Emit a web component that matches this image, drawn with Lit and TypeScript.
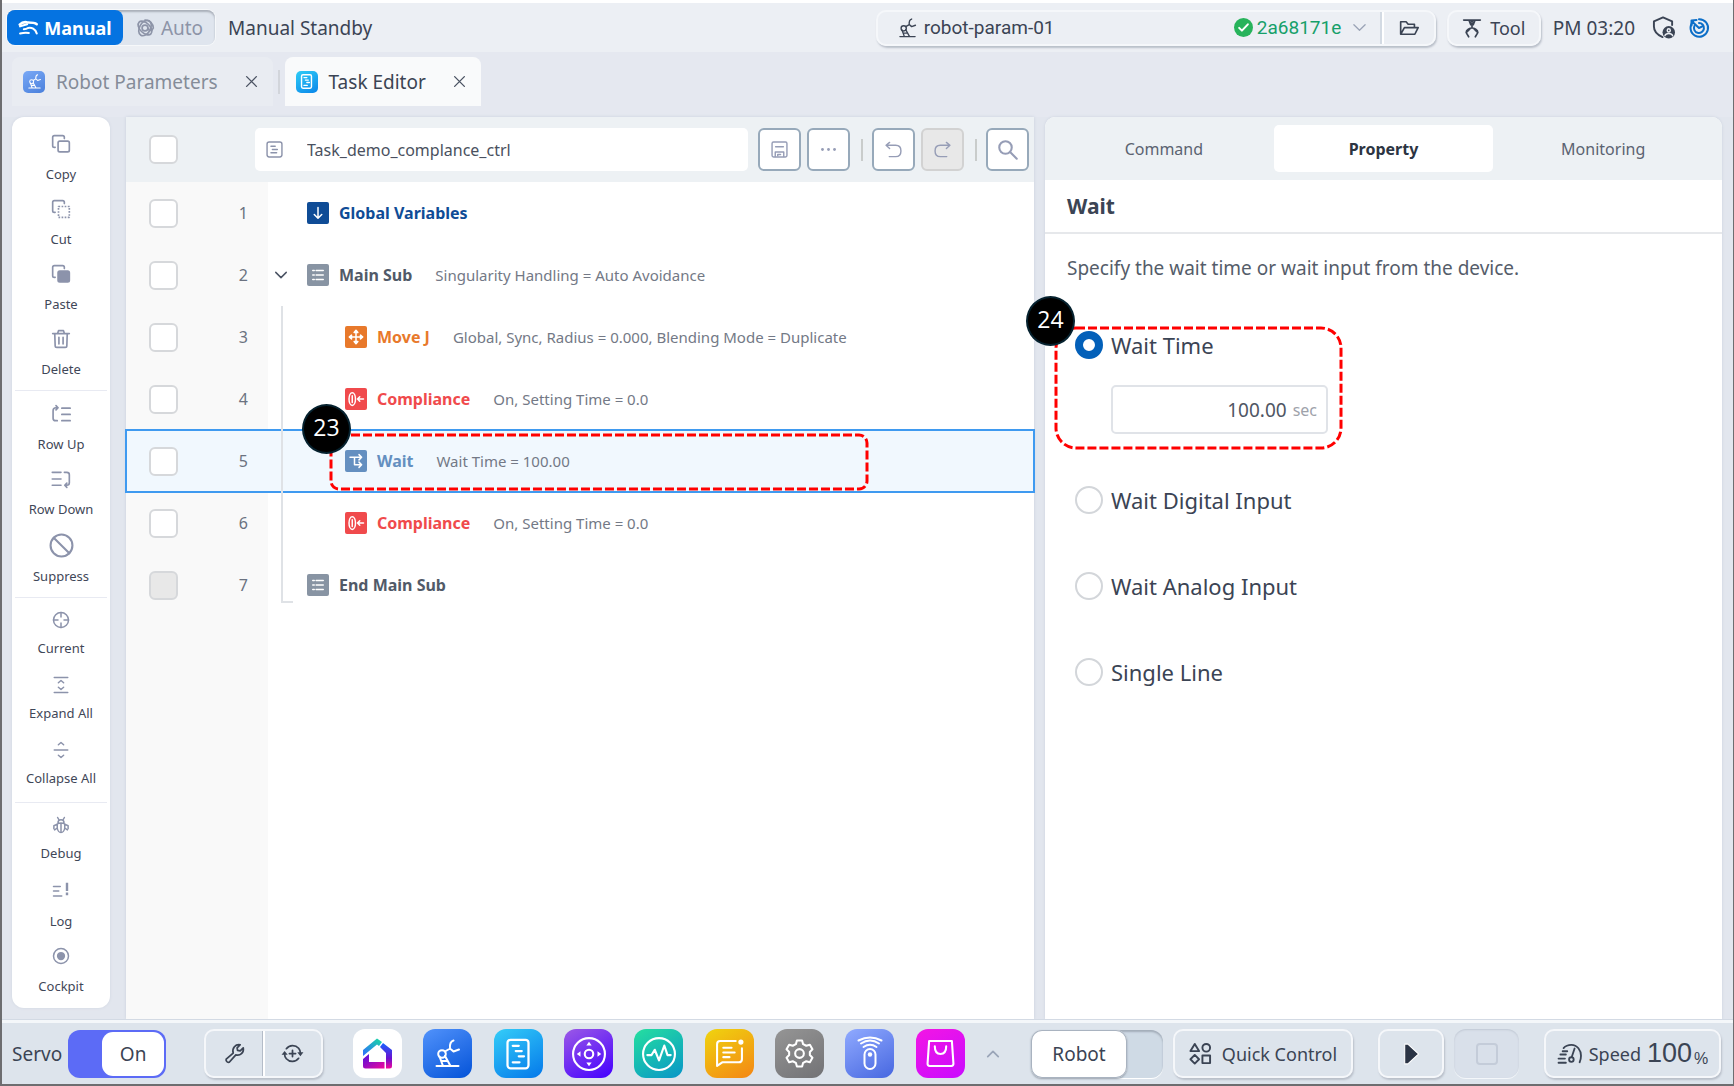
import { LitElement, html, svg, css, nothing, type TemplateResult, type SVGTemplateResult } from "lit";
import { customElement, state } from "lit/decorators.js";
import { classMap } from "lit/directives/class-map.js";

type Drawing = { box?: string; body: SVGTemplateResult };

const robotArm = svg`<path d="M1 27h22M4 17.500 7.500 27M9.500 17 15 27M6 22h5M9.500 12.500l5-3M18 1.500c-3 1-4 3-3.500 8l3.500 3 5.500-2"/><circle cx="6.500" cy="15" r="3.800"/>`;
const sheet = svg`<rect x="5" y="2.500" width="14" height="19" rx="2"/><path d="M8.500 6.500h4M10.500 10h4M12.500 13.500h3.500M8.500 17.500h4.500"/>`;

const ICONS: Record<string, Drawing> = {
  hand: {
    box: "0 0 24 18",
    body: svg`<path stroke-width="3" d="M2 5C5 2 9 1.500 12 2.500 16 2.500 20 2.500 22.500 4.500"/><path stroke-width="2.500" d="M2.500 7 11 4.500M7 10.500Q10 10.500 12 9C16 8 21 10 22.500 15.500M2.500 15.500Q9 14 13 15"/>`,
  },
  auto: { body: svg`<circle cx="12" cy="12" r="3.500"/><ellipse cx="12" cy="12" rx="6" ry="10" transform="rotate(-45 12 12)"/><ellipse cx="12" cy="12" rx="6.500" ry="10" transform="rotate(30 12 12)"/><path d="M15.500 12c1 4 5 4 6.500 0 0-5-4-9.500-10-9.500"/>` },
  robot: { box: "0 0 24 29", body: robotArm },
  sheet: { body: sheet },
  check: { body: svg`<circle cx="12" cy="12" r="12" fill="currentColor" stroke="none"/><path stroke="#fff" stroke-width="2.500" d="m6.500 12.500 3.500 3.500 7.500-8"/>` },
  down: { body: svg`<path d="m3 7.500 9 9 9-9"/>` },
  up: { body: svg`<path d="m3 16.500 9-9 9 9"/>` },
  folder: { body: svg`<path d="M2 19.500V4.500h6.500l2.500 3h7.500v4M2 19.500 6.500 11.500H23l-4 8z"/>` },
  gripper: { body: svg`<path d="M2 2.500h20M8.500 3l2 5h3l2-5M12 8v4M12 12c-2.500 0-7 2-7 5.500l3 5M12 12c2.500 0 7 2 7 5.500l-3 5M5 17.500 9.500 13M19 17.500 14.500 13"/><circle cx="12" cy="5.500" r="1.500"/>` },
  shield: { body: svg`<path d="M11 22c-6-2.500-9-6-9-11V5.500L11.500 1.500 21 5.500v4"/><circle cx="17.500" cy="17" r="6.500" fill="currentColor" stroke="none"/><circle cx="17.500" cy="15" r="1.600" stroke="#eceff4" stroke-width="1.500"/><path stroke="#eceff4" stroke-width="1.500" d="M13.500 20.500c1-3 7-3 8 0"/>` },
  swirl: { body: svg`<g stroke-width="2.400"><path d="M5 4.500a10.500 10.500 0 1 0 7-3"/><path d="M6.500 9.500a6 6 0 1 0 5.500-3.500"/><path d="M12 12 3 3.500M9 2.500 3 3v6M12 12l4-2"/></g>` },
  close: { body: svg`<path d="m3 3 18 18M21 3 3 21"/>` },
  copy: { body: svg`<rect x="8.500" y="8.500" width="13.500" height="13" rx="2"/><path d="M5 16H4a2 2 0 0 1-2-2V4a2 2 0 0 1 2-2h10a2 2 0 0 1 2 2v1.500"/>` },
  cut: { body: svg`<rect x="9" y="9" width="13" height="13" stroke-linecap="butt" stroke-dasharray="2 1.700"/><path d="M5 16H4a2 2 0 0 1-2-2V4a2 2 0 0 1 2-2h10a2 2 0 0 1 2 2v1.500"/>` },
  paste: { body: svg`<rect x="8.500" y="8.500" width="13.500" height="13" rx="2" fill="currentColor"/><path d="M5 16H4a2 2 0 0 1-2-2V4a2 2 0 0 1 2-2h10a2 2 0 0 1 2 2v1.500"/>` },
  trash: { body: svg`<path d="M2 5.500h20M4.500 5.500 5 20a2 2 0 0 0 2 2h10a2 2 0 0 0 2-2l.500-14.500M8 5l1-3h6l1 3M9.500 10v8M14.500 10v8"/>` },
  rowUp: { body: svg`<path d="M8 4.500H6Q2.500 4.500 2.500 8v9q0 3 3 3h2M6 2l2.500 2.500L6 7M13 5h10M13 12.500h10M13 20h10"/>` },
  rowDown: { body: svg`<path d="M16 4h3q3 0 3 3v9.500q0 3-3 3h-2M19 17l-2.500 2.500 2.500 2.500M1.500 4H12M1.500 12H12M1.500 19.500H12"/>` },
  suppress: { body: svg`<circle cx="12" cy="12" r="10.500"/><path d="m4.500 4.500 15 15"/>` },
  target: { body: svg`<circle cx="12" cy="12" r="10"/><path d="M12 2v6M12 16v6M2 12h6M16 12h6"/>` },
  expand: { body: svg`<path d="M3 2h18M3 22h18M8.500 9l3.500-3 3.500 3M8.500 15l3.500 3 3.500-3"/>` },
  collapse: { body: svg`<path d="M3 12h18M8.500 5 12 2l3.500 3M8.500 19l3.500 3 3.500-3"/>` },
  bug: { body: svg`<path d="M7 10.500Q12 8 17 10.500V16q-1 6-5 6t-5-6zM8 9q0-4 4-4t4 4M12 10v12M7.500 2l2 3.500M16.500 2l-2 3.500M7 11l-4.500 2v4M17 11l4.500 2v4M7 16l-3.500 2.500M17 16l3.500 2.500"/>` },
  log: { body: svg`<path d="M2 6h9M2 12h7M2 18.500h11"/><path stroke-width="3.200" stroke-linecap="butt" d="M20 1v11M20 14v3.500"/>` },
  record: { body: svg`<circle cx="12" cy="12" r="10"/><circle cx="12" cy="12" r="5.500" fill="currentColor" stroke="none"/>` },
  note: { body: svg`<rect x="1.500" y="1.500" width="21" height="21" rx="3"/><path d="M7 7.500h6M9 12h7M7 16.500h8"/>` },
  save: { body: svg`<rect x="1.500" y="1.500" width="21" height="21" rx="2"/><path d="M6.500 8h11M6 22v-6.500h12V22M9.500 21v-2h4"/>` },
  dots: { body: svg`<g fill="currentColor" stroke="none"><circle cx="3.500" cy="12" r="2"/><circle cx="12" cy="12" r="2"/><circle cx="20.500" cy="12" r="2"/></g>` },
  undo: { body: svg`<path d="M6.500 2 1.500 6l5 4.500M2 6h13q7.500 0 7.500 8t-7.500 8H6"/>` },
  redo: { body: svg`<path d="m17.500 2 5 4-5 4.500M22 6H9q-7.500 0-7.500 8T9 22h9"/>` },
  search: { body: svg`<circle cx="9" cy="9" r="7.500"/><path d="m14.500 14.500 8 8"/>` },
  arrowDown: { body: svg`<path d="M12 4.500v14M7 14l5 5 5-5"/>` },
  list: { body: svg`<path d="M5 6h2M5 12h2M5 18h2M9.500 6H19M9.500 12H19M9.500 18H19"/>` },
  move: { body: svg`<path d="M12 4v16M4 12h16"/><path fill="currentColor" d="m12 3 2.500 3h-5zM12 21l2.500-3h-5zM3 12l3-2.500v5zM21 12l-3-2.500v5z"/>` },
  compliance: { body: svg`<ellipse cx="7" cy="12" rx="4.300" ry="8.500"/><path d="M7 7.500v9M14 12h8M17 9l-3 3 3 3"/>` },
  wait: { body: svg`<path d="M4 7h15M10 7v10h9M16 3.500 19.500 7 16 10.500M16 13.500l3.500 3.500-3.500 3.500"/>` },
  wrench: { body: svg`<path d="M2.500 18.500 10.500 11.500C9 6 13 1 18.500 2L15 5.500l.500 3 3 .500L22 5.500c1 5.500-3.500 9.500-8.500 8L6 22q-2 .500-3-1t-.500-2.500z"/>` },
  cycle: { body: svg`<path d="M5 6.500a9 9 0 0 1 14-.500q2 2.500 2 5M19 17.500a9 9 0 0 1-14 .500q-2-2.500-2-5M12 8.500v7M8.500 12h7"/><path fill="currentColor" stroke="none" d="M17.500 10.500H24.500L21 15zM-.500 13.500h7L3 9z"/>` },
  jog: { box: "0 0 32 32", body: svg`<circle cx="16" cy="16" r="15"/><circle cx="16" cy="16" r="4"/><path fill="currentColor" stroke="none" d="m16 4.500 2.500 3.500h-5zM16 27.500l2.500-3.500h-5zM4.500 16 8 13.500v5zM27.500 16 24 13.500v5z"/>` },
  pulse: { box: "0 0 32 32", body: svg`<circle cx="16" cy="16" r="15"/><path d="M5 17h4l3-5 4 10 5-14 3 9h3"/>` },
  memo: { box: "0 0 28 28", body: svg`<path d="M20 2H5Q2 2 2 5v21l5-3.500h16q3 0 3-3V9M8 8.500h8M8 13h11M8 17.500h6"/><circle cx="25" cy="3" r="2.500" fill="currentColor" stroke="none"/>` },
  gear: { box: "0 0 28 28", body: svg`<circle cx="14" cy="14" r="4.200"/><path d="M11.500 1.500h5l1 3.500 3 1.500 3.500-1 2.500 4.500-2.500 2.500v3l2.500 2.500-2.500 4.500-3.500-1-3 1.500-1 3.500h-5l-1-3.500-3-1.500-3.500 1L1.500 18 4 15.500v-3L1.500 10 4 5.500l3.500 1 3-1.500z"/>` },
  remote: { box: "0 0 28 34", body: svg`<rect x="8.500" y="12" width="11" height="20" rx="5.500"/><circle cx="14" cy="17.500" r="2.200" fill="currentColor" stroke="none"/><path d="M7.500 9q6.500-4.500 13 0M5 5.500q9-6 18 0M2.500 2.500q11.500-6 23 0" transform="translate(0 1)"/>` },
  bag: { box: "0 0 28 28", body: svg`<path d="M3 2h22l1.500 22q0 2-2 2h-21q-2 0-2-2zM8.500 7q0 7.500 5.500 7.500T19.500 7"/>` },
  shapes: { body: svg`<path d="m6 2 4.500 7.500h-9zM6 13.500l4.500 4.500L6 22.500 1.500 18z"/><circle cx="18" cy="6" r="4"/><rect x="14" y="14" width="8" height="8"/>` },
  play: { box: "0 0 20 24", body: svg`<path fill="currentColor" stroke="#fff" stroke-width="1.200" d="M3 1h3.500L18.500 12 6.500 23H3z"/>` },
  stop: { body: svg`<rect x="2" y="2" width="20" height="20" rx="3"/>` },
  gauge: { box: "0 0 28 24", body: svg`<path d="M7 5.500Q10 2 15.500 2C22 2 26 8 26 14q0 4-1.500 7M1.500 21.500h8M1.500 17h7M3.500 12.500h6M6 9h5M16 15l3-9"/><circle cx="15.500" cy="18" r="2.500"/>` },
};

const icon = (name: string, cls = ""): TemplateResult => {
  const d = ICONS[name];
  return html`<svg class="icon ${cls}" viewBox=${d.box ?? "0 0 24 24"} aria-hidden="true">${d.body}</svg>`;
};

const TOOL_GROUPS: { name: string; icon: string; size?: string }[][] = [
  [
    { name: "Copy", icon: "copy" },
    { name: "Cut", icon: "cut" },
    { name: "Paste", icon: "paste" },
    { name: "Delete", icon: "trash" },
  ],
  [
    { name: "Row Up", icon: "rowUp" },
    { name: "Row Down", icon: "rowDown" },
    { name: "Suppress", icon: "suppress", size: "large" },
  ],
  [
    { name: "Current", icon: "target", size: "small" },
    { name: "Expand All", icon: "expand", size: "small" },
    { name: "Collapse All", icon: "collapse", size: "small" },
  ],
  [
    { name: "Debug", icon: "bug", size: "small" },
    { name: "Log", icon: "log", size: "slim" },
    { name: "Cockpit", icon: "record", size: "slim" },
  ],
];

interface Row {
  name: string;
  kind: string;
  icon: string;
  detail?: string;
  nested?: boolean;
  guide?: "through" | "end";
  open?: boolean;
  locked?: boolean;
}

const ROWS: Row[] = [
  { name: "Global Variables", kind: "globals", icon: "arrowDown" },
  { name: "Main Sub", kind: "sub", icon: "list", detail: "Singularity Handling = Auto Avoidance", open: true },
  { name: "Move J", kind: "motion", icon: "move", detail: "Global, Sync, Radius = 0.000, Blending Mode = Duplicate", nested: true, guide: "through" },
  { name: "Compliance", kind: "force", icon: "compliance", detail: "On, Setting Time = 0.0", nested: true, guide: "through" },
  { name: "Wait", kind: "flow", icon: "wait", detail: "Wait Time = 100.00", nested: true, guide: "through" },
  { name: "Compliance", kind: "force", icon: "compliance", detail: "On, Setting Time = 0.0", nested: true, guide: "through" },
  { name: "End Main Sub", kind: "sub", icon: "list", guide: "end", locked: true },
];

const APPS = [
  { name: "Robot Parameters", kind: "app-params", icon: "robot" },
  { name: "Task Editor", kind: "app-tasks", icon: "sheet" },
  { name: "Jog", kind: "app-jog", icon: "jog" },
  { name: "Status", kind: "app-pulse", icon: "pulse" },
  { name: "Logs", kind: "app-logs", icon: "memo" },
  { name: "Settings", kind: "app-settings", icon: "gear" },
  { name: "Remote Control", kind: "app-remote", icon: "remote" },
  { name: "Store", kind: "app-store", icon: "bag" },
];

const WAIT_MODES = ["Wait Time", "Wait Digital Input", "Wait Analog Input", "Single Line"];

@customElement("app-root")
export class AppRoot extends LitElement {
  @state() private selected = 4;
  @state() private mode = 0;
  @state() private panel = "Property";

  static styles = css`
    :host {
      display: block;
      font-family: "Noto Sans", "Open Sans", sans-serif;
      color: #3b4454;
    }
    *, *::before, *::after { box-sizing: border-box; }
    button, input, select { font: inherit; color: inherit; margin: 0; }
    button { background: none; border: 0; padding: 0; display: flex; align-items: center; justify-content: center; cursor: pointer; white-space: nowrap; }
    .icon { display: block; flex: none; width: 20px; height: 20px; fill: none; stroke: currentColor; stroke-width: 2; stroke-linecap: round; stroke-linejoin: round; overflow: visible; }
    .sr { position: absolute; width: 1px; height: 1px; overflow: hidden; clip-path: inset(50%); }

    .frame { min-height: 100vh; display: flex; flex-direction: column; background: #e2e6ee; border: solid #6d6d70; border-width: 0 1px 2px 2px; }

    .status { display: flex; align-items: center; height: 52px; padding: 0 24px 0 5px; border-top: 3px solid #fff; background: #eceff4; font-size: 19px; white-space: nowrap; }
    .modes { display: flex; height: 35px; border-radius: 8px; background: #dfe5ee; box-shadow: inset 0 2px 2px #a9afb9, 0 0 0 1px #f6f8fa; }
    .mode { width: 92px; gap: 6px; color: #8d94a8; }
    .mode.on { width: 116px; color: #fff; font-size: 18px; font-weight: 700; background: #0573e1; border-radius: 8px; }
    .mode .icon { width: 20px; height: 20px; }
    .state { margin: 0 auto 0 13px; }
    .raised { border: 2px solid #f5f7fa; border-radius: 10px; box-shadow: 1px 2px 2px #b9bfc9; }
    .project { display: flex; height: 36px; width: 33%; max-width: 560px; }
    .project .name { flex: 1; display: flex; align-items: center; gap: 8px; padding-left: 21px; font-family: Roboto, "Liberation Sans", sans-serif; }
    .project .name .icon { width: 17px; height: 20px; }
    .version { display: flex; align-items: center; gap: 4px; color: #16a06a; font-family: Roboto, "Liberation Sans", sans-serif; padding-right: 13px; border-right: 2px solid #d3dae3; }
    .version .icon { width: 19px; height: 19px; color: #27b35b; }
    .version select { appearance: none; border: 0; background: none; padding: 0; outline: 0; }
    .version .caret { width: 15px; height: 15px; margin-left: 6px; color: #9aa3b6; }
    .open { width: 52px; border-left: 2px solid #fff; }
    .tool { height: 36px; width: 94px; gap: 8px; margin: 0 12px 0 11px; font-size: 18px; }
    .clock { margin-right: 17px; }
    .status .shield { width: 23px; height: 23px; }
    .status .power { margin-left: 14px; color: #0d6fc8; }

    .tabs { display: flex; align-items: center; padding: 5px 10px 11px; background: #e5e8f0; }
    .tab { display: flex; align-items: center; height: 49px; border-radius: 8px 8px 0 0; padding: 0 15px 0 11px; background: #e9ecf2; color: #858c99; font-size: 19px; }
    .tab.on { background: #f9fafb; color: #3b4454; }
    .tab .label { gap: 11px; }
    .tab .close { margin-left: 27px; color: #4b5363; }
    .tab .close .icon { width: 13px; height: 13px; stroke-width: 2.500; }
    .rule { width: 2px; height: 24px; margin: 0 5px; background: #d2d5db; }
    .chip { display: grid; place-items: center; width: 22px; height: 22px; border-radius: 5px; color: #fff; }
    .chip .icon { width: 13px; height: 15px; }
    .chip-params { background: linear-gradient(150deg, #7aa9f6, #4a80dc); }
    .chip-tasks { background: linear-gradient(150deg, #2fcdf6, #0a86ea); }
    .chip-tasks .icon { width: 17px; height: 17px; }

    .work { flex: 1; display: flex; padding: 0 11px 0 10px; }
    .tools { flex: none; align-self: flex-start; width: 98px; background: #fff; border-radius: 12px; padding: 4px 3px 1px; box-shadow: 0 0 3px #cfd5e0; }
    .group { padding: 5px 0 4px; }
    .group + .group { border-top: 1px solid #e8eaf2; }
    .entry { flex-direction: column; justify-content: flex-start; width: 100%; height: 65px; font-size: 13px; color: #3f4758; }
    .entry .pic { display: grid; place-items: center; height: 36px; color: #8c93ab; }
    .entry .text { line-height: 24px; white-space: nowrap; }
    .entry.small .pic { height: 33px; }
    .entry.large .pic { height: 38px; }
    .entry.large { height: 67px; }
    .entry.large .icon { width: 25px; height: 25px; }
    .entry.small .icon, .entry.slim .icon { width: 18px; height: 18px; }

    .editor { flex: 908 1 0; min-width: 0; margin: 0 11px 0 16px; background: linear-gradient(to right, #f9f9f9 142px, #fff 142px); box-shadow: 0 0 3px #c9d0dc; }
    .head { display: flex; align-items: center; height: 65px; padding: 0 5px 0 23px; background: #edf1f4; }
    .box { appearance: none; display: block; flex: none; width: 29px; height: 29px; border: 2px solid #d6d8db; border-radius: 6px; background: #fff; }
    .box:disabled { background: #e8e8e8; }
    .file { flex: 1; display: flex; align-items: center; height: 43px; margin: 0 10px 0 77px; padding-left: 11px; gap: 24px; background: #fff; border-radius: 5px; color: #8c93ab; }
    .file .icon { width: 17px; height: 17px; }
    .file input { flex: 1; min-width: 0; border: 0; outline: 0; padding: 0; background: none; font-size: 16px; color: #4a5160; }
    .sq { flex: none; width: 43px; height: 43px; margin-right: 6px; border: 2px solid #97a9ba; border-radius: 6px; background: #fff; color: #969db6; }
    .sq:last-child { margin-right: 0; }
    .sq:disabled { background: #e8e8e8; border-color: #d2d2d2; }
    .sq .icon { width: 17px; height: 17px; }
    .sq .search { width: 20px; height: 20px; stroke-width: 2.500; }
    .head .rule { height: 22px; margin: 0 9px 0 5px; background: #c9cccb; }

    .program { width: 100%; border-collapse: collapse; }
    .program td { padding: 0; height: 62px; }
    .pick { width: 86px; }
    .pick .box { margin-left: 23px; }
    .num { width: 56px; text-align: right; font-size: 16px; color: #6b7280; }
    .num span { display: block; padding-right: 20px; }
    .current { background: #f1f8fe; outline: 2px solid #3f9af0; outline-offset: -1px; }
    .line { position: relative; display: flex; align-items: center; height: 62px; font-size: 15px; color: #737986; white-space: nowrap; }
    .gutter { flex: none; align-self: stretch; width: 39px; padding-left: 6px; display: flex; align-items: center; }
    .gutter .icon { width: 14px; height: 14px; color: #4b5363; stroke-width: 2.500; }
    .guide { width: 12px; height: 62px; margin-left: 7px; border-left: 2px solid #dfe2e6; }
    .guide.end { align-self: flex-start; height: 49px; border-bottom: 2px solid #dfe2e6; }
    .nested .gutter { width: 77px; }
    .badge { flex: none; display: grid; place-items: center; width: 22px; height: 22px; border-radius: 2px; color: #fff; background: currentColor; }
    .badge .icon { width: 18px; height: 18px; }
    .title { margin: 0 23px 0 10px; font-size: 16px; font-weight: 700; }
    .globals .badge { background: #0f4c96; }
    .globals .title { color: #0f4c96; }
    .sub .badge { background: #8894a3; }
    .sub .title { color: #515a68; }
    .motion .badge { background: #e8792b; }
    .motion .title { color: #e8792b; }
    .force .badge { background: #f04a4c; }
    .force .title { color: #f04a4c; }
    .flow .badge { background: #648fc0; }
    .flow .title { color: #648fc0; }

    .callout { position: absolute; pointer-events: none; }
    .callout svg { display: block; width: 100%; height: 100%; overflow: visible; }
    .callout rect { width: 100%; height: 100%; fill: none; stroke: #f00; stroke-width: 3; stroke-dasharray: 9 3; }
    .pin { position: absolute; display: grid; place-items: center; width: 49px; height: 50px; border: 2px solid #06222f; border-radius: 50%; background: #000; color: #fff; font-family: "Open Sans", "Noto Sans", sans-serif; font-size: 23px; line-height: 1; padding-bottom: 4px; }
    .callout.step { left: 63px; top: 5px; width: 536px; height: 54px; }
    .step .pin { left: -29px; top: -31px; }
    .callout.field { left: -19px; top: 3px; width: 285px; height: 120px; }
    .field .pin { left: -30px; top: -32px; }

    .side { flex: 677 1 0; min-width: 0; background: #fff; border-radius: 10px 10px 0 0; box-shadow: 0 0 3px #c9d0dc; }
    .views { display: flex; height: 63px; padding: 8px 9px; background: #edf1f4; border-radius: 10px 10px 0 0; }
    .view { flex: 1; border-radius: 5px; font-size: 16px; color: #5b6371; }
    .view.on { background: #fff; color: #2c3442; font-weight: 700; }
    h2 { margin: 0; padding: 0 22px; line-height: 52px; font-size: 21px; font-weight: 700; color: #3b4454; border-bottom: 2px solid #e6e8eb; }
    .hint { margin: 20px 0 0; padding: 0 22px; line-height: 28px; font-size: 19px; color: #555d6a; }
    .options { position: relative; border: 0; margin: 0; padding: 43px 30px 0; }
    .option { position: relative; margin-bottom: 46px; }
    .choice { display: flex; align-items: center; gap: 8px; height: 40px; font-size: 22px; color: #3b4454; }
    .radio { appearance: none; width: 28px; height: 28px; border: 2px solid #d3d6da; border-radius: 50%; background: #fff; }
    .radio:checked { border: 8px solid #0360b9; }
    .amount { display: flex; align-items: center; gap: 6px; width: 217px; height: 49px; margin: 20px 0 0 36px; padding: 0 9px; border: 2px solid #e0e3e8; border-radius: 5px; color: #9ea2aa; font-size: 16px; }
    .amount input { flex: 1; min-width: 0; border: 0; outline: 0; padding: 0; text-align: right; background: none; font-size: 19px; color: #4f5664; }

    .dock { display: flex; align-items: center; height: 65px; padding: 3px 12px 0 10px; border-top: 1px solid #d3dae4; background: #dde4ec; box-shadow: inset 0 3px 0 #f4f7fa; font-size: 19px; white-space: nowrap; }
    .switch { height: 48px; justify-content: flex-end; border-radius: 12px; }
    .knob { height: 100%; display: grid; place-items: center; background: #fff; border-radius: 11px; }
    .servo { width: 98px; margin: 0 38px 0 6px; padding: 2px; background: #5c6bf6; }
    .servo .knob { width: 62px; }
    .pair { display: flex; height: 49px; width: 119px; margin-right: 30px; }
    .pair button { flex: 1; }
    .pair button + button { border-left: 2px solid #fff; box-shadow: -1px 0 0 #b4bcc8; }
    .pair .icon { width: 21px; height: 21px; }
    .apps { flex: 1; display: flex; justify-content: space-between; align-items: center; margin-right: 31px; }
    .app { flex: none; width: 49px; height: 49px; border-radius: 12px; color: #fff; }
    .app .icon { width: 29px; height: 29px; }
    .app-home { background: #fff; }
    .app-home .icon { width: 31px; height: 31px; }
    .app-params { background: linear-gradient(150deg, #5192fb, #0453d8); }
    .app-tasks { background: linear-gradient(150deg, #34cdf8, #0478ea); }
    .app-jog { background: linear-gradient(150deg, #9b59e6, #4400ff); }
    .app-pulse { background: linear-gradient(150deg, #25df9f, #0795c8); }
    .app-logs { background: linear-gradient(150deg, #efd40f, #f48614); }
    .app-settings { background: linear-gradient(150deg, #959595, #727275); }
    .app-remote { background: linear-gradient(150deg, #90aaff, #4767e0); }
    .app-store { background: linear-gradient(150deg, #f316e4, #c90bff); }
    .app-tasks .icon { width: 36px; height: 36px; stroke-width: 1.500; }
    .app-jog .icon, .app-pulse .icon { width: 34px; height: 34px; }
    .app-remote .icon { width: 28px; height: 34px; }
    .more .icon { width: 14px; height: 14px; color: #9aa5b8; stroke-width: 3; }
    .unit { width: 132px; justify-content: flex-start; margin-right: 10px; background: #cfdae5; box-shadow: inset 0 2px 2px #a3adb9, 0 1px 0 #fff; }
    .unit .knob { width: 96px; box-shadow: 0 1px 2px #8f99a6, inset 0 0 0 1px #a9b3c0; }
    .quick { height: 49px; width: 180px; gap: 10px; margin-right: 25px; font-size: 18px; }
    .quick .icon { width: 23px; height: 23px; }
    .run { height: 49px; width: 66px; margin-right: 10px; color: #2b3445; }
    .run .icon { width: 18px; height: 24px; }
    .halt { height: 49px; width: 65px; margin-right: 25px; border-radius: 12px; color: #c4ccd9; background: #d9e0ea; box-shadow: inset 0 1px 2px #c0c8d4, 0 1px 0 #f4f7fa; }
    .halt .icon { width: 24px; height: 24px; }
    .speed { height: 49px; width: 177px; gap: 6px; font-size: 18px; }
    .speed .icon { width: 26px; height: 22px; }
    .speed .value { font-family: "Liberation Sans", sans-serif; font-size: 27px; }
    .speed .percent { font-family: "Liberation Sans", sans-serif; font-size: 16px; align-self: flex-end; margin-left: -4px; padding-bottom: 8px; }
  `;

  private statusBar() {
    return html`
      <header class="status">
        <div class="modes">
          <button class="mode on">${icon("hand")}Manual</button>
          <button class="mode">${icon("auto")}Auto</button>
        </div>
        <span class="state">Manual Standby</span>
        <div class="project raised">
          <span class="name">${icon("robot")}robot-param-01</span>
          <label class="version">
            ${icon("check")}
            <select aria-label="Parameter version"><option>2a68171e</option></select>
            ${icon("down", "caret")}
          </label>
          <button class="open" aria-label="Open project">${icon("folder")}</button>
        </div>
        <button class="tool raised">${icon("gripper")}Tool</button>
        <time class="clock" datetime="15:20">PM 03:20</time>
        ${icon("shield", "shield")}
        <button class="power" aria-label="Connection">${icon("swirl")}</button>
      </header>`;
  }

  private tabBar() {
    return html`
      <nav class="tabs">
        <div class="tab">
          <button class="label"><span class="chip chip-params">${icon("robot")}</span>Robot Parameters</button>
          <button class="close" aria-label="Close Robot Parameters">${icon("close")}</button>
        </div>
        <span class="rule"></span>
        <div class="tab on">
          <button class="label"><span class="chip chip-tasks">${icon("sheet")}</span>Task Editor</button>
          <button class="close" aria-label="Close Task Editor">${icon("close")}</button>
        </div>
      </nav>`;
  }

  private toolbox() {
    return html`
      <aside class="tools">
        ${TOOL_GROUPS.map(
          (group) => html`<div class="group">
            ${group.map(
              (t) => html`<button class="entry ${t.size ?? ""}">
                <span class="pic">${icon(t.icon)}</span><span class="text">${t.name}</span>
              </button>`,
            )}
          </div>`,
        )}
      </aside>`;
  }

  private callout(kind: string, number: number, radius: number) {
    return html`<div class="callout ${kind}">
      <svg aria-hidden="true"><rect rx=${radius}></rect></svg>
      <span class="pin">${number}</span>
    </div>`;
  }

  private row(r: Row, i: number) {
    return html`
      <tr class=${classMap({ current: i === this.selected })} @click=${() => (this.selected = i)}>
        <td class="pick"><input class="box" type="checkbox" aria-label="Select row ${i + 1}" ?disabled=${r.locked} /></td>
        <td class="num"><span>${i + 1}</span></td>
        <td>
          <div class="line ${r.kind} ${r.nested ? "nested" : ""}">
            <span class="gutter">
              ${r.open ? html`<button aria-label="Collapse ${r.name}">${icon("down")}</button>` : nothing}
              ${r.guide ? html`<span class="guide ${r.guide}"></span>` : nothing}
            </span>
            <span class="badge">${icon(r.icon)}</span>
            <span class="title">${r.name}</span>
            <span>${r.detail ?? nothing}</span>
            ${r.kind === "flow" ? this.callout("step", 23, 8) : nothing}
          </div>
        </td>
      </tr>`;
  }

  private editor() {
    return html`
      <main class="editor">
        <div class="head">
          <input class="box" type="checkbox" aria-label="Select all rows" />
          <label class="file">${icon("note")}<input type="text" aria-label="Task name" .value=${"Task_demo_complance_ctrl"} /></label>
          <button class="sq" aria-label="Save">${icon("save")}</button>
          <button class="sq" aria-label="More">${icon("dots")}</button>
          <span class="rule"></span>
          <button class="sq" aria-label="Undo">${icon("undo")}</button>
          <button class="sq" aria-label="Redo" disabled>${icon("redo")}</button>
          <span class="rule"></span>
          <button class="sq" aria-label="Search">${icon("search", "search")}</button>
        </div>
        <table class="program"><tbody>${ROWS.map((r, i) => this.row(r, i))}</tbody></table>
      </main>`;
  }

  private properties() {
    return html`
      <section class="side">
        <div class="views">
          ${["Command", "Property", "Monitoring"].map(
            (v) => html`<button class=${classMap({ view: true, on: v === this.panel })} @click=${() => (this.panel = v)}>${v}</button>`,
          )}
        </div>
        <h2>Wait</h2>
        <p class="hint">Specify the wait time or wait input from the device.</p>
        <fieldset class="options" aria-label="Wait condition">
          ${WAIT_MODES.map(
            (m, i) => html`<div class="option">
              <label class="choice">
                <input class="radio" type="radio" name="wait" .checked=${i === this.mode} @change=${() => (this.mode = i)} />${m}
              </label>
              ${i === 0
                ? html`<label class="amount"><input type="text" inputmode="decimal" aria-label="Wait time in seconds" .value=${"100.00"} />sec</label>
                    ${this.callout("field", 24, 20)}`
                : nothing}
            </div>`,
          )}
        </fieldset>
      </section>`;
  }

  private homeIcon() {
    return html`<svg class="icon" viewBox="0 0 31 31" aria-hidden="true">
      <defs>
        <linearGradient id="roof" x1="0" y1="1" x2="1" y2="0"><stop offset="0" stop-color="#2f6bff" /><stop offset="1" stop-color="#18dca0" /></linearGradient>
        <linearGradient id="wall" x1="0" y1="0" x2="0" y2="1"><stop offset="0" stop-color="#1664ff" /><stop offset="0.6" stop-color="#6a0fd0" /><stop offset="1" stop-color="#f0089c" /></linearGradient>
        <linearGradient id="floor" x1="0" y1="0" x2="1" y2="1"><stop offset="0" stop-color="#4b10e0" /><stop offset="1" stop-color="#f0089c" /></linearGradient>
      </defs>
      <g stroke="none">
        <path fill="url(#roof)" d="M1 18v-6L15 .500 20 4 17 8l-2-1.500z" />
        <path fill="url(#wall)" d="m21 5 9 7v16q0 2.500-2.500 2.500H24V15l-6-6z" />
        <path fill="url(#floor)" d="m1 21 6-5v8h15.500v6.500H3.500Q1 30.500 1 28z" />
      </g>
    </svg>`;
  }

  private dock() {
    return html`
      <footer class="dock">
        <span id="servo">Servo</span>
        <button class="switch servo" role="switch" aria-checked="true" aria-labelledby="servo"><span class="knob">On</span></button>
        <div class="pair raised">
          <button aria-label="Maintenance">${icon("wrench")}</button>
          <button aria-label="Recovery">${icon("cycle")}</button>
        </div>
        <nav class="apps">
          <button class="app app-home" aria-label="Home">${this.homeIcon()}</button>
          ${APPS.map((a) => html`<button class="app ${a.kind}" aria-label=${a.name}>${icon(a.icon)}</button>`)}
          <button class="more" aria-label="More apps">${icon("up")}</button>
        </nav>
        <button class="switch unit" role="switch" aria-checked="false"><span class="knob">Robot</span></button>
        <button class="quick raised">${icon("shapes")}Quick Control</button>
        <button class="run raised" aria-label="Play">${icon("play")}</button>
        <button class="halt" aria-label="Stop" disabled>${icon("stop")}</button>
        <button class="speed raised">${icon("gauge")}Speed <span class="value">100</span><span class="percent">%</span></button>
      </footer>`;
  }

  render() {
    return html`<div class="frame">
      ${this.statusBar()} ${this.tabBar()}
      <div class="work">${this.toolbox()} ${this.editor()} ${this.properties()}</div>
      ${this.dock()}
    </div>`;
  }
}
